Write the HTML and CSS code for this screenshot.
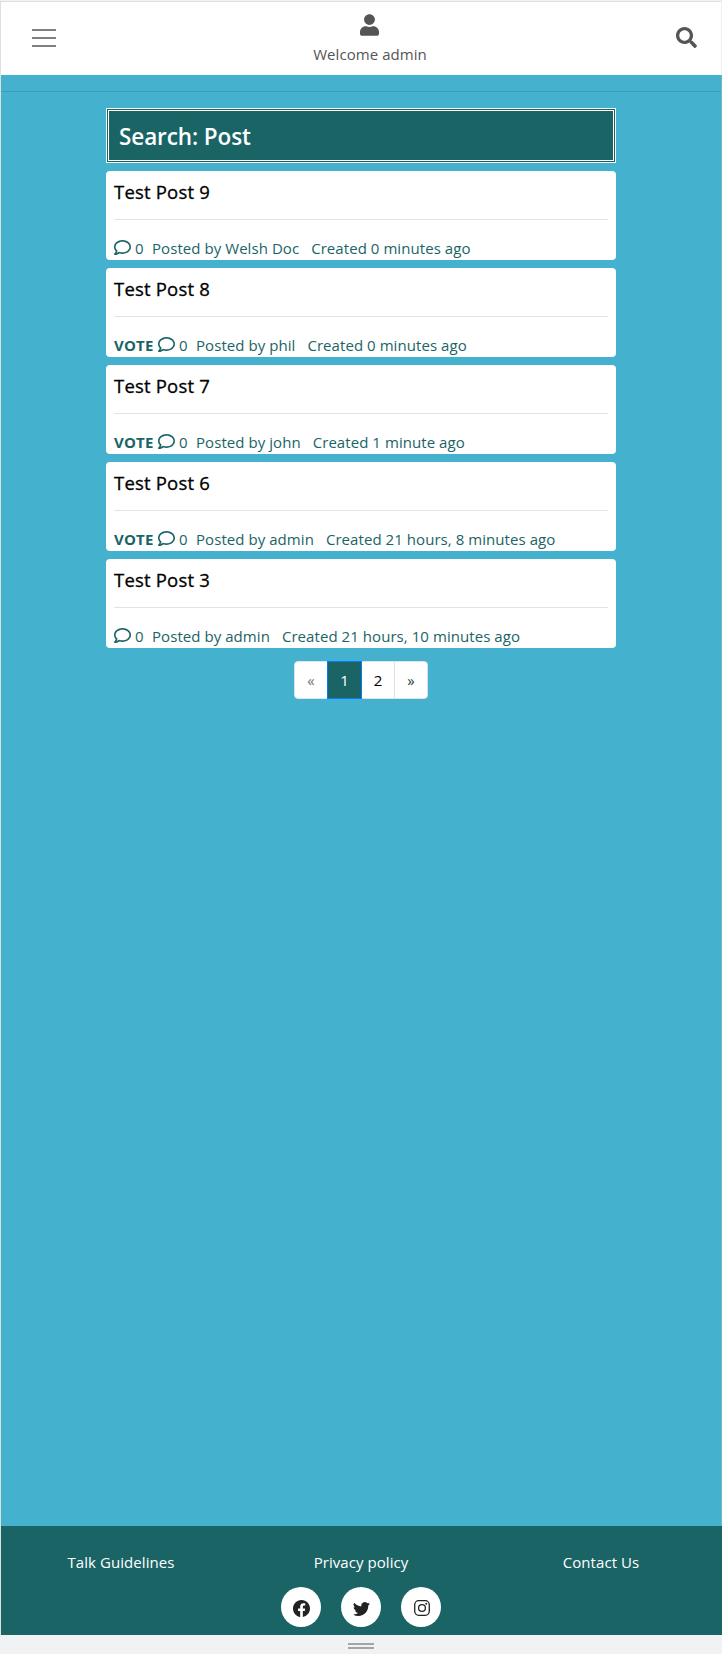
FILE: index.html
```html
<!DOCTYPE html>
<html lang="en">
<head>
<meta charset="utf-8">
<title>Search: Post</title>
<link rel="stylesheet" href="styles.css">
</head>
<body>
<svg width="0" height="0" class="sprite">
  <symbol id="comment" viewBox="0 0 512 512"><path d="M256 32C114.600 32 0 125.100 0 240c0 47.600 19.900 91.200 52.900 126.300C38 405.700 7 439.100 6.500 439.500c-6.600 7-8.400 17.200-4.600 26S14.400 480 24 480c61.500 0 110-25.700 139.100-46.300C192 442.800 223.200 448 256 448c141.400 0 256-93.100 256-208S397.400 32 256 32zm0 368c-26.700 0-53.100-4.100-78.400-12.100l-22.700-7.200-19.500 13.800c-14.300 10.100-33.900 21.400-57.500 29 7.300-12.100 14.400-25.700 19.900-40.200l10.600-28.100-20.600-21.800C69.700 314.100 48 282.200 48 240c0-88.200 93.300-160 208-160s208 71.800 208 160-93.300 160-208 160z"/></symbol>
</svg>
<header class="topbar">
  <button class="menu" aria-label="Menu"><i></i><i></i><i></i></button>
  <div class="welcome">
    <svg class="user" viewBox="0 0 448 512"><path d="M224 256c70.700 0 128-57.300 128-128S294.700 0 224 0 96 57.300 96 128s57.300 128 128 128zm89.600 32h-16.700c-22.200 10.200-46.900 16-72.900 16s-50.600-5.800-72.900-16h-16.700C60.200 288 0 348.200 0 422.400V464c0 26.500 21.500 48 48 48h352c26.500 0 48-21.500 48-48v-41.600c0-74.200-60.200-134.400-134.400-134.400z"/></svg>
    <span>Welcome admin</span>
  </div>
  <svg class="search" viewBox="0 0 512 512"><path d="M505 442.700L405.300 343c-4.500-4.500-10.600-7-17-7H372c27.600-35.300 44-79.700 44-128C416 93.100 322.900 0 208 0S0 93.100 0 208s93.100 208 208 208c48.300 0 92.700-16.400 128-44v16.300c0 6.400 2.500 12.500 7 17l99.700 99.700c9.400 9.400 24.600 9.400 33.900 0l28.300-28.300c9.400-9.400 9.400-24.600.1-34zM208 336c-70.700 0-128-57.200-128-128 0-70.700 57.200-128 128-128 70.700 0 128 57.200 128 128 0 70.700-57.200 128-128 128z"/></svg>
</header>
<main class="content">
  <hr class="divider">
  <div class="column">
    <h1 class="heading">Search: Post</h1>
    <article class="post"><h2>Test Post 9</h2><p class="meta"><svg><use href="#comment"/></svg><span class="count">0</span><span class="author">Posted by Welsh Doc</span><span>Created 0 minutes ago</span></p></article>
    <article class="post"><h2>Test Post 8</h2><p class="meta"><b>VOTE</b><svg><use href="#comment"/></svg><span class="count">0</span><span class="author">Posted by phil</span><span>Created 0 minutes ago</span></p></article>
    <article class="post"><h2>Test Post 7</h2><p class="meta"><b>VOTE</b><svg><use href="#comment"/></svg><span class="count">0</span><span class="author">Posted by john</span><span>Created 1 minute ago</span></p></article>
    <article class="post"><h2>Test Post 6</h2><p class="meta"><b>VOTE</b><svg><use href="#comment"/></svg><span class="count">0</span><span class="author">Posted by admin</span><span>Created 21 hours, 8 minutes ago</span></p></article>
    <article class="post"><h2>Test Post 3</h2><p class="meta"><svg><use href="#comment"/></svg><span class="count">0</span><span class="author">Posted by admin</span><span>Created 21 hours, 10 minutes ago</span></p></article>
    <nav class="pages"><span class="prev">«</span><span class="active">1</span><span>2</span><span class="next">»</span></nav>
  </div>
</main>
<footer class="footer">
  <div class="links"><a>Talk Guidelines</a><a>Privacy policy</a><a>Contact Us</a></div>
  <div class="social">
    <a><svg viewBox="0 0 16 16"><path d="M16 8.049c0-4.446-3.582-8.050-8-8.050C3.580 0-.002 3.603-.002 8.050c0 4.017 2.926 7.347 6.750 7.951v-5.625h-2.030V8.050H6.750V6.275c0-2.017 1.195-3.131 3.022-3.131.876 0 1.791.157 1.791.157v1.980h-1.009c-.993 0-1.303.621-1.303 1.258v1.510h2.218l-.354 2.326H9.250V16c3.824-.604 6.750-3.934 6.750-7.951z"/></svg></a>
    <a><svg viewBox="0 0 16 16"><path d="M5.026 15c6.038 0 9.341-5.003 9.341-9.334 0-.140 0-.282-.006-.422A6.685 6.685 0 0 0 16 3.542a6.658 6.658 0 0 1-1.889.518 3.301 3.301 0 0 0 1.447-1.817 6.533 6.533 0 0 1-2.087.793A3.286 3.286 0 0 0 7.875 6.030a9.325 9.325 0 0 1-6.767-3.429 3.289 3.289 0 0 0 1.018 4.382A3.323 3.323 0 0 1 .640 6.575v.045a3.288 3.288 0 0 0 2.632 3.218 3.203 3.203 0 0 1-.865.115 3.230 3.230 0 0 1-.614-.057 3.283 3.283 0 0 0 3.067 2.277A6.588 6.588 0 0 1 .780 13.580a6.320 6.320 0 0 1-.780-.045A9.344 9.344 0 0 0 5.026 15z"/></svg></a>
    <a><svg class="insta" viewBox="0 0 16 16"><g fill="none" stroke="currentColor" stroke-width="1.3"><rect x=".72" y=".72" width="14.560" height="14.560" rx="4"/><circle cx="8" cy="8" r="3.400"/></g><circle cx="12.270" cy="3.730" r=".96"/></svg></a>
  </div>
</footer>
<div class="grip"><i></i><i></i></div>
</body>
</html>
```
FILE: styles.css
```css
* { box-sizing: border-box; }
body {
  margin: 0;
  height: 1654px;
  display: flex;
  flex-direction: column;
  border-top: 1px solid #f1f2f4;
  background: #f1f2f4;
  font: 15px/24px "Open Sans", sans-serif;
  letter-spacing: 0.06px;
  color: #1a6466;
}
svg { display: block; fill: currentColor; }
.sprite { position: absolute; }
h1, h2, p { margin: 0; }
.topbar {
  height: 74px;
  flex: none;
  display: flex;
  justify-content: space-between;
  border: solid #dfdfdf;
  border-width: 1px 0 0 1px;
  border-right: 1px solid #f1f1f1;
  background: #fff;
  color: #555;
  padding: 0 24px 0 31px;
}
.menu {
  width: 24px;
  border: 0;
  padding: 27px 0 0;
  background: none;
  display: flex;
  flex-direction: column;
  gap: 6px;
}
.menu i { height: 2px; width: 24px; background: #808080; }
.welcome { display: flex; flex-direction: column; align-items: center; padding: 12px 0 0 8px; }
.user { width: 19px; height: 22px; margin-bottom: 6px; }
.search { width: 21px; height: 21px; margin-top: 25px; }
.content {
  flex: 1;
  background: #44b1ce;
  border-left: 1px solid #dfdfdf;
  border-right: 1px solid #6ab9cf;
}
.divider { margin: 16px 0; border: 0; height: 1px; background: #3b9fbc; }
.column { width: 510px; margin: 0 auto; }
.heading {
  height: 55px;
  border: 3px double #fff;
  background: #1a6466;
  color: #fff;
  padding: 1px 10px 0;
  font-size: 22.5px;
  line-height: 50px;
  font-weight: 600;
  letter-spacing: -0.1px;
  margin-bottom: 8px;
}
.post {
  height: 89px;
  margin-bottom: 8px;
  padding: 0 8px;
  border-radius: 4px;
  background: #fff;
}
.post h2 {
  height: 49px;
  border-bottom: 1px solid #e3e3e3;
  color: #000;
  font-size: 18.5px;
  line-height: 41px;
  font-weight: 500;
  letter-spacing: 0.2px;
  -webkit-text-stroke: 0.3px #000;
}
.meta { display: flex; padding-top: 16px; white-space: pre; }
.meta b { width: 44px; font-weight: 700; letter-spacing: 0.2px; }
.meta svg { width: 17px; height: 17px; margin: 3px 4px 0 0; }
.count { width: 17px; }
.author { margin-right: 12px; }
.pages {
  width: 134px;
  height: 38px;
  margin: 13px auto 0;
  display: flex;
  border: 1px solid #dee2e6;
  border-radius: 4px;
  background: #fff;
  line-height: 36px;
  text-align: center;
  color: #000;
}
.pages span { width: 33px; border-right: 1px solid #dee2e6; }
.pages .prev { width: 32px; border: 0; color: #6c757d; }
.pages .active { width: 35px; margin: -1px 0; line-height: 36px; border: 1px solid #007bff; background: #1a6466; color: #fff; }
.pages .next { width: 32px; border: 0; color: #1a3f40; }
.footer {
  height: 109px;
  flex: none;
  border-left: 1px solid #dfdfdf;
  border-right: 1px solid #1a6466;
  background: #1a6466;
  color: #fff;
  padding-top: 24px;
}
.links { display: grid; grid-template-columns: repeat(3, 240px); text-align: center; }
.social { display: flex; justify-content: center; gap: 20px; padding-top: 13px; }
.social a {
  width: 40px;
  height: 40px;
  border-radius: 50%;
  background: #fff;
  color: #222;
  display: grid;
  place-items: center;
}
.social svg { width: 17px; height: 17px; margin: 2px 0 0 1px; }
.social .insta { width: 16px; height: 16px; }
.grip { height: 19px; flex: none; display: flex; flex-direction: column; align-items: center; gap: 2px; padding-top: 8px; }
.grip i { width: 26px; height: 2px; background: #a5a5a5; }
```
